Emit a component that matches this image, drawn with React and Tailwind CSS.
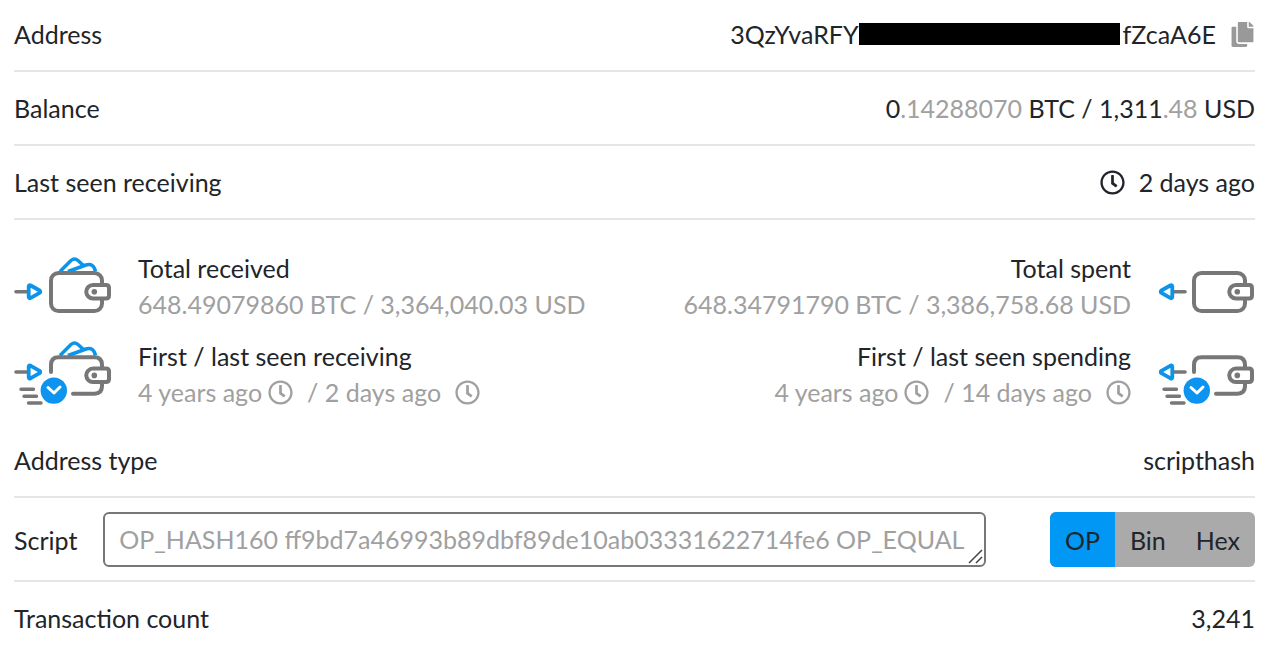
import React from "react";
import { useState } from "react";
import { FaCopy, FaRegClock } from "react-icons/fa";

const scripts = {
  OP: "OP_HASH160 ff9bd7a46993b89dbf89de10ab03331622714fe6 OP_EQUAL",
  Bin: "a914ff9bd7a46993b89dbf89de10ab03331622714fe687",
  Hex: "a914ff9bd7a46993b89dbf89de10ab03331622714fe687",
};

const Arrow = ({ y, out }) => (
  <g
    transform={out ? `translate(30 ${y}) scale(-1 1)` : `translate(0 ${y})`}
    fill="none"
    strokeLinecap="round"
    strokeLinejoin="round"
  >
    <path d="M2 0H13" stroke="#777" strokeWidth="3.6" />
    <path
      d="M14.7 -5.2V5.2Q14.9 7.2 16.8 6.2L25.6 1.2Q27 0 25.6 -1.2L16.8 -6.2Q14.9 -7.2 14.7 -5.2Z"
      stroke="#0c94ea"
      strokeWidth="3.8"
    />
  </g>
);

const Notes = () => (
  <g fill="none" stroke="#0c94ea" strokeWidth="3.5" strokeLinejoin="round">
    <path d="M46 21.5L57 10.5Q60.5 7.5 64 10.5L70 16" />
    <path d="M54 21.5L72 15Q79.5 12.5 81.5 21.5" />
  </g>
);

const Clasp = () => (
  <g>
    <path
      d="M79 35H92Q95 35 95 38V45.5Q95 48.5 92 48.5H79A6.75 6.75 0 0 1 79 35Z"
      fill="#fff"
      stroke="#777"
      strokeWidth="4"
    />
    <circle cx="80.3" cy="41.8" r="2.8" fill="#777" />
  </g>
);

const WalletIcon = ({ out }) => (
  <svg className="h-[72px] w-[98px] shrink-0" viewBox="0 0 98 72" aria-hidden="true">
    <Arrow y={41.7} out={out} />
    {!out && <Notes />}
    <rect x="37" y="23" width="51" height="38" rx="7.5" fill="none" stroke="#777" strokeWidth="4" />
    <Clasp />
  </svg>
);

const WalletTimeIcon = ({ out }) => (
  <svg className="h-[72px] w-[98px] shrink-0" viewBox="0 0 98 72" aria-hidden="true">
    <Arrow y={34} out={out} />
    {!out && (
      <g transform="translate(0 -4)">
        <Notes />
      </g>
    )}
    <path
      d="M37 34V27Q37 19.3 44.5 19.3H80.5Q88 19.3 88 27V48Q88 55.7 80.5 55.7H59"
      fill="none"
      stroke="#777"
      strokeWidth="4"
      strokeLinecap="round"
    />
    <g transform="translate(0 -4.4)">
      <Clasp />
    </g>
    <path d="M7 51.3H19.5M10 58.3H22.5M14.5 65H27" stroke="#777" strokeWidth="3.4" strokeLinecap="round" />
    <circle cx="39.8" cy="52.6" r="13.2" fill="#0c94f0" />
    <path
      d="M34 49.5L40 55L46 49"
      fill="none"
      stroke="#fff"
      strokeWidth="3"
      strokeLinecap="round"
      strokeLinejoin="round"
    />
  </svg>
);

const Row = ({ label, children }) => (
  <div className="flex items-center justify-between border-b-2 border-[#e6e6e6] py-[18px] first:pt-4 last:border-b-0">
    <dt>{label}</dt>
    <dd className="flex items-center">{children}</dd>
  </div>
);

const Stat = ({ icon, title, children, right }) => (
  <div className={right ? "flex flex-row-reverse gap-[26px] text-right" : "flex gap-[26px]"}>
    {icon}
    <div>
      <dt>{title}</dt>
      <dd className="text-[#a0a0a0]">{children}</dd>
    </div>
  </div>
);

const Seen = ({ first, last, right }) => (
  <span className={right ? "flex items-center justify-end" : "flex items-center"}>
    {first}
    <FaRegClock className="mr-[14px] ml-[6px]" />
    / {last}
    <FaRegClock className="ml-[14px]" />
  </span>
);

const App = () => {
  const [mode, setmode] = useState("OP");

  const buttonCSS = "h-[55px] cursor-pointer px-[15px]";

  return (
    <dl className="bg-white pr-[25px] pl-[14px] font-['Lato',sans-serif] text-[25px] leading-9 text-[#212529]">
      <Row label="Address">
        <span>3QzYvaRFY</span>
        <span className="mr-[3px] h-[22px] w-[261px] bg-black"></span>
        <span>fZcaA6E</span>
        <button className="ml-[14px] cursor-pointer text-[#999]" aria-label="Copy address">
          <FaCopy />
        </button>
      </Row>
      <Row label="Balance">
        <span>
          0<span className="text-[#a0a0a0]">.14288070</span> BTC / 1,311
          <span className="text-[#a0a0a0]">.48</span> USD
        </span>
      </Row>
      <Row label="Last seen receiving">
        <FaRegClock className="mr-[14px]" />
        2 days ago
      </Row>

      <div className="flex justify-between pt-[30px] pb-[14px]">
        <div className="flex flex-col gap-4">
          <Stat icon={<WalletIcon />} title="Total received">
            648.49079860 BTC / 3,364,040.03 USD
          </Stat>
          <Stat icon={<WalletTimeIcon />} title="First / last seen receiving">
            <Seen first="4 years ago" last="2 days ago" />
          </Stat>
        </div>
        <div className="flex flex-col gap-4">
          <Stat icon={<WalletIcon out />} title="Total spent" right>
            648.34791790 BTC / 3,386,758.68 USD
          </Stat>
          <Stat icon={<WalletTimeIcon out />} title="First / last seen spending" right>
            <Seen first="4 years ago" last="14 days ago" right />
          </Stat>
        </div>
      </div>

      <Row label="Address type">scripthash</Row>

      <div className="flex items-center border-b-2 border-[#e6e6e6] pt-[14px] pb-[13px]">
        <dt>
          <label htmlFor="script">Script</label>
        </dt>
        <dd className="flex flex-1 items-center">
          <div className="relative mr-16 ml-[26px] flex flex-1">
            <textarea
              id="script"
              rows={1}
              readOnly
              value={scripts[mode]}
              className="h-[55px] w-full resize-none overflow-hidden rounded-md border-2 border-[#777] py-[7px] pl-[14px] text-[#a0a0a0]"
            />
            <svg className="absolute right-[2px] bottom-[2px] h-4 w-4" viewBox="0 0 16 16" aria-hidden="true">
              <path d="M1 14L14 1M8 14L14 8" stroke="#444" strokeWidth="1.5" />
            </svg>
          </div>
          <div className="flex overflow-hidden rounded-md bg-[#aaa]">
            {Object.keys(scripts).map((name) => (
              <button
                key={name}
                className={name === mode ? `${buttonCSS} bg-[#0097f5]` : buttonCSS}
                aria-pressed={name === mode}
                onClick={() => setmode(name)}
              >
                {name}
              </button>
            ))}
          </div>
        </dd>
      </div>

      <Row label="Transaction count">3,241</Row>
    </dl>
  );
};

export default App;
